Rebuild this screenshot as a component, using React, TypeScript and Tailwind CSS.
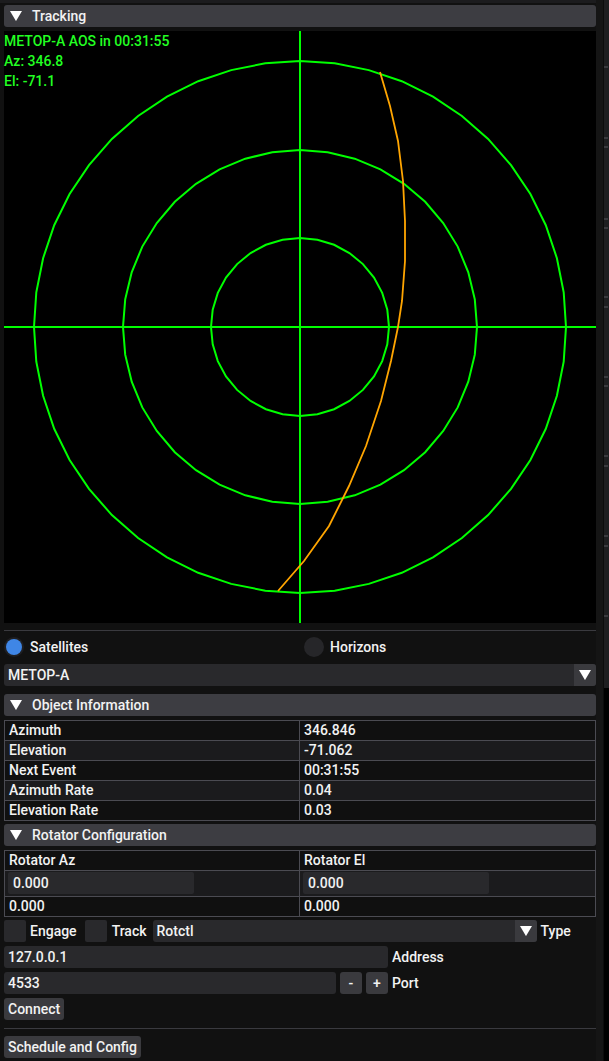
import React from 'react';

const GREEN = '#00ff00';

const ring = (r: number, n: number, cx = 296, cy = 296) =>
  Array.from({ length: n }, (_, i) => {
    const a = (i / n) * Math.PI * 2;
    return `${(cx + r * Math.cos(a)).toFixed(1)},${(cy + r * Math.sin(a)).toFixed(1)}`;
  }).join(' ');

const passPoints = [
  [376, 41], [386, 75], [394, 110], [399, 150], [401, 190], [401, 230],
  [398, 270], [394, 296], [387, 330], [377, 370], [362, 415], [345, 455],
  [325, 495], [300, 530], [274, 560],
].map((p) => p.join(',')).join(' ');

const Arrow = ({ size = 12 }: { size?: number }) => (
  <svg width={size} height={size * 0.85} viewBox="0 0 12 10" className="shrink-0">
    <polygon points="0,0 12,0 6,10" fill="#ffffff" />
  </svg>
);

const Header = ({ title, className = '' }: { title: string; className?: string }) => (
  <div className={`h-[22px] rounded-[3px] bg-[#3d3d42] flex items-center pl-[6px] gap-[10px] ${className}`}>
    <Arrow />
    <span>{title}</span>
  </div>
);

const objectInfo = [
  ['Azimuth', '346.846'],
  ['Elevation', '-71.062'],
  ['Next Event', '00:31:55'],
  ['Azimuth Rate', '0.04'],
  ['Elevation Rate', '0.03'],
];

const ticks = [67, 138, 147, 219, 228, 297, 307, 377, 386, 456, 466, 536, 546, 616];

export default function App() {
  return (
    <div
      className="w-[609px] h-[1061px] bg-[#111111] text-[#f2f2f2] text-[14px] flex overflow-hidden"
      style={{ fontFamily: 'Roboto, "Noto Sans", sans-serif' }}
    >
      <div className="w-[596px] pl-[4px] flex flex-col font-medium">
        <div className="h-[3px] -ml-[4px] bg-[#1c1c1e]" />
        <Header title="Tracking" className="mt-[2px]" />

        {/* polar plot */}
        <div className="relative mt-[4px] h-[592px] bg-black">
          <svg width="592" height="592" viewBox="0 0 592 592" className="block">
            <g fill="none" stroke={GREEN} strokeWidth="2">
              <polygon points={ring(266, 48)} />
              <polygon points={ring(177, 40)} />
              <polygon points={ring(89, 32)} />
              <line x1="296" y1="0" x2="296" y2="592" />
              <line x1="0" y1="296" x2="592" y2="296" />
            </g>
            <polyline points={passPoints} fill="none" stroke="#ffa500" strokeWidth="1.8" />
          </svg>
          <div className="absolute top-0 left-0 text-[#22ff22] leading-[20px]">
            <div>METOP-A AOS in 00:31:55</div>
            <div>Az: 346.8</div>
            <div>El: -71.1</div>
          </div>
        </div>

        <div className="mt-[7px] h-px bg-[#3a3a3f]" />

        <div className="mt-[5px] h-[22px] flex items-center">
          <div className="w-[300px] flex items-center gap-[6px]">
            <div className="w-[20px] h-[20px] rounded-full bg-[#1f1f22] flex items-center justify-center">
              <div className="w-[16px] h-[16px] rounded-full bg-[#3f86e6]" />
            </div>
            <span>Satellites</span>
          </div>
          <div className="flex items-center gap-[6px]">
            <div className="w-[20px] h-[20px] rounded-full bg-[#262629]" />
            <span>Horizons</span>
          </div>
        </div>

        <div className="mt-[6px] h-[22px] rounded-[3px] bg-[#29292c] flex items-center overflow-hidden">
          <span className="flex-1 pl-[4px]">METOP-A</span>
          <div className="w-[22px] h-full bg-[#3a3a3e] flex items-center justify-center">
            <Arrow />
          </div>
        </div>

        <Header title="Object Information" className="mt-[8px]" />

        <div className="mt-[4px] border border-[#4b4b52]">
          {objectInfo.map(([k, v], i) => (
            <div
              key={k}
              className={`grid grid-cols-[294px_1fr] h-[19px] leading-[19px] ${i > 0 ? 'box-content border-t border-[#4b4b52]' : ''} ${i % 2 ? 'bg-[#1b1b1d]' : 'bg-[#101010]'}`}
            >
              <div className="pl-[4px]">{k}</div>
              <div className="pl-[4px] border-l border-[#4b4b52]">{v}</div>
            </div>
          ))}
        </div>

        <Header title="Rotator Configuration" className="mt-[3px]" />

        <div className="mt-[4px] border border-[#4b4b52] bg-[#101010]">
          <div className="grid grid-cols-[294px_1fr] h-[19px] leading-[19px]">
            <div className="pl-[4px]">Rotator Az</div>
            <div className="pl-[4px] border-l border-[#4b4b52]">Rotator El</div>
          </div>
          <div className="grid grid-cols-[294px_1fr] h-[25px] box-content border-t border-[#4b4b52] bg-[#1b1b1d]">
            <div className="pl-[3px] pt-[1px]">
              <div className="w-[186px] h-[22px] rounded-[2px] bg-[#29292c] pl-[5px] leading-[22px]">0.000</div>
            </div>
            <div className="pl-[3px] pt-[1px] border-l border-[#4b4b52]">
              <div className="w-[186px] h-[22px] rounded-[2px] bg-[#29292c] pl-[5px] leading-[22px]">0.000</div>
            </div>
          </div>
          <div className="grid grid-cols-[294px_1fr] h-[19px] leading-[19px] box-content border-t border-[#4b4b52]">
            <div className="pl-[4px]">0.000</div>
            <div className="pl-[4px] border-l border-[#4b4b52]">0.000</div>
          </div>
        </div>

        <div className="mt-[3px] h-[22px] flex items-center">
          <div className="w-[22px] h-[22px] rounded-[2px] bg-[#29292c]" />
          <span className="ml-[4px]">Engage</span>
          <div className="ml-[8px] w-[22px] h-[22px] rounded-[2px] bg-[#29292c]" />
          <span className="ml-[5px]">Track</span>
          <div className="ml-[6px] w-[384px] h-[22px] rounded-[3px] bg-[#29292c] flex items-center overflow-hidden">
            <span className="flex-1 pl-[4px]">Rotctl</span>
            <div className="w-[22px] h-full bg-[#3a3a3e] flex items-center justify-center">
              <Arrow />
            </div>
          </div>
          <span className="ml-[4px]">Type</span>
        </div>

        <div className="mt-[4px] h-[22px] flex items-center">
          <div className="w-[384px] h-[22px] rounded-[3px] bg-[#29292c] pl-[4px] leading-[22px]">127.0.0.1</div>
          <span className="ml-[4px]">Address</span>
        </div>

        <div className="mt-[4px] h-[22px] flex items-center">
          <div className="w-[332px] h-[22px] rounded-[3px] bg-[#29292c] pl-[4px] leading-[22px]">4533</div>
          <button className="ml-[4px] w-[22px] h-[22px] rounded-[3px] bg-[#3a3a3e] leading-[22px]">-</button>
          <button className="ml-[4px] w-[22px] h-[22px] rounded-[3px] bg-[#3a3a3e] leading-[22px]">+</button>
          <span className="ml-[4px]">Port</span>
        </div>

        <div className="mt-[4px] h-[22px] flex">
          <button className="h-[22px] px-[4px] rounded-[3px] bg-[#3a3a3e] leading-[22px]">Connect</button>
        </div>

        <div className="mt-[8px] h-px bg-[#3a3a3f]" />

        <div className="mt-[7px] h-[22px] flex">
          <button className="h-[22px] px-[4px] rounded-[3px] bg-[#3a3a3e] leading-[22px]">Schedule and Config</button>
        </div>
      </div>

      {/* scrollbar and neighbouring window edge */}
      <div className="w-[7px] h-full bg-[#151515]" />
      <div className="w-px h-full bg-[#0c0c0c]" />
      <div className="w-[5px] h-full flex flex-col">
        <div className="h-[688px] bg-[#1e1e20]">
          <svg width="5" height="688" className="block">
            {ticks.map((y) => (
              <line key={y} x1="0" y1={y} x2="4" y2={y} stroke="#56565c" strokeWidth="1" />
            ))}
          </svg>
        </div>
        <div className="flex-1 bg-black" />
      </div>
    </div>
  );
}
